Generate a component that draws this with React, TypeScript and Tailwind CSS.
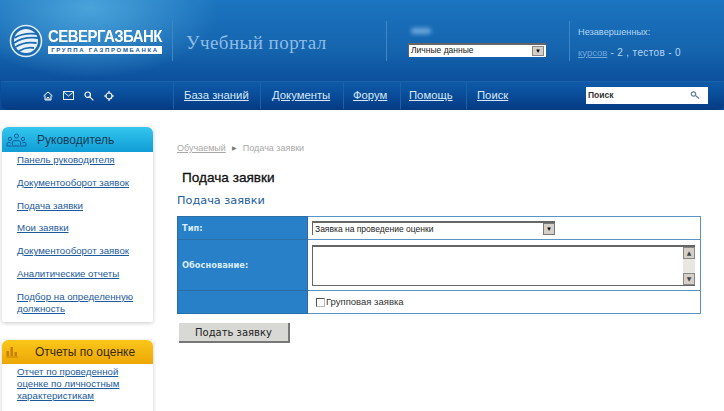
const SANS = "font-['Liberation_Sans',Arial,sans-serif]";

const MANAGER_LINKS = [
  'Панель руководителя',
  'Документооборот заявок',
  'Подача заявки',
  'Мои заявки',
  'Документооборот заявок',
  'Аналитические отчеты',
  'Подбор на определенную должность',
];

const NAV = [
  { label: 'База знаний', cls: 'w-[87px] pl-[10px]' },
  { label: 'Документы', cls: 'w-[83px] pl-[11px]' },
  { label: 'Форум', cls: 'w-[57px] pl-[9px]' },
  { label: 'Помощь', cls: 'w-[66px] pl-[8px]' },
  { label: 'Поиск', cls: 'w-[60px] pl-[10px]' },
];

function Logo() {
  return (
    <svg width="34" height="34" viewBox="0 0 34 34" className="shrink-0">
      <circle cx="17" cy="17" r="15.5" fill="#1b6cb4" stroke="#dcecf8" strokeWidth="1.6" />
      <circle cx="17" cy="17" r="12" fill="#e8f2fa" />
      <path d="M5.5 14c6-4 14-5 23-4M5 19c7-5 15-6 24-5M6.5 23c6-4 14-5 21-4M10 27c5-3 10-4 15-3" fill="none" stroke="#1b6cb4" strokeWidth="1.8" />
    </svg>
  );
}

function NavIcons() {
  return (
    <div className="flex w-[172px] items-center pl-[42px] gap-[10px] shrink-0">
      <svg width="10" height="10" viewBox="0 0 10 10" fill="none" stroke="#fff" strokeWidth="1">
        <path d="M.5 5 5 1l4.500 4M2 4.500V9h6V4.500M4 9V6.500h2V9" />
      </svg>
      <svg width="11" height="9" viewBox="0 0 11 9" fill="none" stroke="#e4f0fa" strokeWidth="1">
        <rect x=".5" y=".5" width="10" height="8" />
        <path d="m.5 1 5 4 5-4" />
      </svg>
      <svg width="10" height="10" viewBox="0 0 10 10" fill="none" stroke="#fff" strokeWidth="1.200">
        <circle cx="3.700" cy="3.700" r="2.700" />
        <path d="m5.800 5.800 3.500 3.500" />
      </svg>
      <svg width="10" height="10" viewBox="0 0 10 10" fill="none" stroke="#fff" strokeWidth="1.200">
        <circle cx="5" cy="5" r="3" />
        <path d="M5 0v2M5 8v2M0 5h2M8 5h2" />
      </svg>
    </div>
  );
}

function Header() {
  return (
    <header className="h-[110px] bg-[radial-gradient(ellipse_130px_70px_at_90px_8px,#4aa3da,transparent),linear-gradient(180deg,#1b74bf_0%,#1564ae_45%,#0c4f9c_75%,#0b4a96_100%)]">
      <div className="flex h-[81px] items-center">
        <div className="flex w-[172px] shrink-0 items-center pl-[9px] gap-[5px]">
          <Logo />
          <div className="w-[114px] pt-[2px]">
            <div className="origin-left scale-x-[0.88] text-[17px] leading-[15px] font-bold text-white font-['Liberation_Sans',sans-serif] tracking-[-0.6px] whitespace-nowrap">
              СЕВЕРГАЗБАНК
            </div>
            <div className="mt-[2px] bg-white text-[#14599f] text-[6px] leading-[8px] h-[8px] font-bold tracking-[1.7px] whitespace-nowrap text-center font-['Liberation_Sans',sans-serif]">
              ГРУППА ГАЗПРОМБАНКА
            </div>
          </div>
        </div>
        <div className="h-[40px] w-[214px] shrink-0 border-l border-[#3f86c4] pl-[13px] pt-[10px] text-[19px] leading-[24px] text-[#8ebde6] font-['Liberation_Serif',serif] tracking-[0.45px]">
          Учебный портал
        </div>
        <div className="h-[40px] w-[183px] shrink-0 border-l border-[#3f86c4] pl-[22px]">
          <div className="h-[6px] w-[20px] ml-[2px] mt-[7px] rounded-full bg-[#6ea8dc] blur-[2px]" />
          <div className={`mt-[9px] -ml-[1px] flex h-[14px] w-[138px] items-center border-t-2 border-l border-[#666] bg-white pl-[2px] pr-[2px] text-[8.500px] text-[#222] ${SANS}`}>
            <span className="flex-1">Личные данные</span>
            <span className="flex h-[10px] w-[12px] items-center justify-center bg-[#d4d0c8] border border-[#888] text-[6px] leading-none text-black">▼</span>
          </div>
        </div>
        <div className={`h-[40px] flex-1 border-l border-[#3f86c4] pl-[8px] text-[10px] text-[#b4d6f2] ${SANS}`}>
          <div className="leading-[12px] pt-[5px] text-[9.200px]">Незавершенных:</div>
          <div className="mt-[9px] leading-[12px] whitespace-nowrap">
            <span className="text-[#6ea9de] underline text-[9.500px]">курсов</span>
            <span className="tracking-[0.35px]"> - 2 , тестов - 0</span>
          </div>
        </div>
      </div>
      <nav className="ml-[1px] flex h-[28px] items-center rounded-b-[7px] bg-[linear-gradient(180deg,#0e5aa8_0%,#0a4f9c_40%,#063b84_100%)] border-t border-[#1a62aa] shadow-[0_1px_0_#0a3a7a]">
        <NavIcons />
        {NAV.map((n) => (
          <a key={n.label} className={`flex h-full shrink-0 items-center border-l border-[#1d62a8] text-[11.300px] text-[#d5e8f8] underline ${n.cls} ${SANS}`}>
            {n.label}
          </a>
        ))}
        <div className={`ml-[60px] flex h-[17px] w-[122px] items-center justify-between bg-white pl-[2px] pr-[8px] text-[8.500px] font-bold text-[#333] ${SANS}`}>
          Поиск
          <svg width="10" height="9" viewBox="0 0 10 9" fill="none" stroke="#5a7f9e" strokeWidth="1.200">
            <circle cx="3.500" cy="3" r="2.200" />
            <path d="m5.500 4.500 3.500 3" />
          </svg>
        </div>
      </nav>
    </header>
  );
}

function PeopleIcon() {
  return (
    <svg width="21" height="14" viewBox="0 0 21 14" fill="none" stroke="#0f5f9f" strokeWidth="1" className="shrink-0">
      <circle cx="10.500" cy="3" r="2" />
      <circle cx="4" cy="6" r="1.700" />
      <circle cx="17" cy="6" r="1.700" />
      <path d="M6.500 12V9c0-2 8-2 8 0v3M1 13v-2.500c0-1.500 4-1.500 4 0M16 10.500c0-1.500 4-1.500 4 0V13M1 13h19" />
    </svg>
  );
}

function ChartIcon() {
  return (
    <svg width="12" height="12" viewBox="0 0 12 12" fill="#c77f06" className="shrink-0">
      <rect x="4.500" y="1" width="2.500" height="9" />
      <rect x="0.500" y="5" width="2.500" height="5" />
      <rect x="8.500" y="6" width="2.500" height="4" />
      <rect x="0" y="10.500" width="12" height="1" />
    </svg>
  );
}

function Sidebar() {
  return (
    <aside className={`w-[175px] shrink-0 pl-[2px] pt-[17px] ${SANS}`}>
      <section className="w-[151px] rounded-b-[2px] bg-white shadow-[0_1px_4px_rgba(0,0,0,0.22)] pb-[7px]">
        <h3 className="flex h-[25px] items-center rounded-t-[6px] bg-[linear-gradient(180deg,#33c6ee,#119dd6)] pl-[4px] text-[12px] font-normal text-[#123c58]">
          <PeopleIcon />
          <span className="ml-[10px]">Руководитель</span>
        </h3>
        <ul className="pl-[15px] pr-[2px]">
          {MANAGER_LINKS.map((l, i) => (
            <li key={i} className="mb-[10.800px] leading-[12px] text-[9.700px] text-[#1c5a9c] underline first:mt-[2px] last:mb-0">
              {l}
            </li>
          ))}
        </ul>
      </section>
      <section className="mt-[18px] w-[151px] bg-white shadow-[0_1px_4px_rgba(0,0,0,0.22)] pb-[12px]">
        <h3 className="flex h-[24px] items-center rounded-t-[6px] bg-[linear-gradient(180deg,#fbc71a,#eca706)] pl-[4px] text-[12px] font-normal text-[#3a2a05]">
          <ChartIcon />
          <span className="ml-[17px]">Отчеты по оценке</span>
        </h3>
        <p className="pl-[15px] pr-[20px] pt-[2px] text-[9.700px] leading-[12px] text-[#1c5a9c] underline">
          Отчет по проведенной оценке по личностным характеристикам
        </p>
      </section>
    </aside>
  );
}

function RequestForm() {
  return (
    <table className="w-[524px] border-collapse text-[8.300px] font-['DejaVu_Sans',sans-serif]">
      <tbody>
        <tr className="h-[23px]">
          <th className="w-[130px] border border-[#2a6ea8] bg-[#2780c8] pl-[4px] text-left font-bold text-[#d9ecfa]">Тип:</th>
          <td className="border border-[#5a94c4] pl-[4px]">
            <div className={`flex h-[14px] w-[243px] items-center justify-between border-t-2 border-l border-[#666] bg-white pl-[2px] text-[8.500px] text-[#222] ${SANS}`}>
              Заявка на проведение оценки
              <span className="flex h-[12px] w-[12px] items-center justify-center bg-[#d4d0c8] border border-[#777] text-[6px] leading-none text-black">▼</span>
            </div>
          </td>
        </tr>
        <tr className="h-[51px]">
          <th className="border border-[#2a6ea8] bg-[#2780c8] pl-[4px] text-left font-bold text-[#d9ecfa]">Обоснование:</th>
          <td className="border border-[#5a94c4] pl-[4px]">
            <div className="flex h-[41px] w-[383px] justify-end border-t-2 border-l border-b border-[#666] bg-white">
              <div className="flex w-[12px] flex-col justify-between bg-[#e8e6e0] text-[6px] leading-none text-[#444]">
                <span className="flex h-[12px] items-center justify-center bg-[#d4d0c8] border border-[#888]">▲</span>
                <span className="flex h-[12px] items-center justify-center bg-[#d4d0c8] border border-[#888]">▼</span>
              </div>
            </div>
          </td>
        </tr>
        <tr className="h-[23px]">
          <th className="border border-[#2a6ea8] bg-[#2780c8]" />
          <td className="border border-[#5a94c4] pl-[8px]">
            <label className={`flex items-center gap-[1px] text-[9.500px] text-[#333] ${SANS}`}>
              <span className="h-[9px] w-[9px] border border-[#555] border-b-[#bbb] border-r-[#bbb] bg-white" />
              Групповая заявка
            </label>
          </td>
        </tr>
      </tbody>
    </table>
  );
}

export default function App() {
  return (
    <div className="h-[411px] w-[724px] overflow-hidden bg-white">
      <Header />
      <div className="flex">
        <Sidebar />
        <main className="flex-1 pl-[2px]">
          <div className={`mt-[32px] flex items-center gap-[6px] text-[9px] leading-[12px] text-[#a8a8a8] ${SANS}`}>
            <span className="underline">Обучаемый</span>
            <span className="text-[6px] text-[#777]">▶</span>
            <span>Подача заявки</span>
          </div>
          <h1 className={`mt-[15px] ml-[5px] text-[13.600px] leading-[18px] font-normal text-[#111] [-webkit-text-stroke:0.3px_#111] ${SANS}`}>
            Подача заявки
          </h1>
          <h2 className="mt-[7px] text-[11.300px] leading-[14px] text-[#1b5c9e] font-['DejaVu_Sans',sans-serif]">
            Подача заявки
          </h2>
          <div className="mt-[8px]">
            <RequestForm />
          </div>
          <button className="mt-[9px] ml-[2px] h-[20px] w-[111px] border-r-2 border-b-2 border-[#777] bg-[#d8d8d4] text-center text-[10px] text-[#222] font-['DejaVu_Sans',sans-serif]">
            Подать заявку
          </button>
        </main>
      </div>
    </div>
  );
}
